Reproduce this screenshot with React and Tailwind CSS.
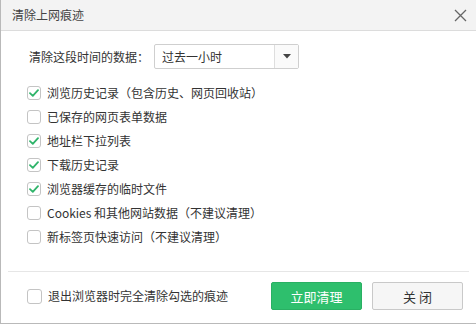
import { useState } from "react";

const items = [
  { label: "浏览历史记录（包含历史、网页回收站）", checked: true },
  { label: "已保存的网页表单数据", checked: false },
  { label: "地址栏下拉列表", checked: true },
  { label: "下载历史记录", checked: true },
  { label: "浏览器缓存的临时文件", checked: true },
  { label: "Cookies 和其他网站数据（不建议清理）", checked: false },
  { label: "新标签页快速访问（不建议清理）", checked: false },
];

function CheckBox({ checked, onClick, size = "w-[14px] h-[14px]" }) {
  return (
    <button
      onClick={onClick}
      className={`${size} shrink-0 rounded-[3px] border border-[#c4c4c4] bg-white flex items-center justify-center`}
    >
      {checked && (
        <svg width="10" height="8" viewBox="0 0 10 8" fill="none">
          <path
            d="M1 4.2 L3.8 6.8 L9 1.2"
            stroke="#2fb46a"
            strokeWidth="1.8"
            strokeLinecap="round"
            strokeLinejoin="round"
          />
        </svg>
      )}
    </button>
  );
}

function App() {
  const [checks, setChecks] = useState(items.map((i) => i.checked));
  const [exitClear, setExitClear] = useState(false);

  const toggle = (idx) => {
    setChecks(checks.map((c, i) => (i === idx ? !c : c)));
  };

  return (
    <div
      className="w-[476px] h-[324px] bg-white flex flex-col border-l border-b border-[#b9b9b9] text-[#333] text-[12px]"
      style={{ fontFamily: '"Noto Sans CJK SC", "Noto Sans", sans-serif' }}
    >
      <div className="h-[31px] shrink-0 bg-[#f3f3f3] border-b border-[#dcdcdc] flex items-center justify-between pl-[11px] pr-[8px]">
        <span className="text-[12px] text-[#444] leading-none">清除上网痕迹</span>
        <button className="w-[16px] h-[16px] flex items-center justify-center">
          <svg width="13" height="13" viewBox="0 0 13 13">
            <path d="M1 1 L12 12 M12 1 L1 12" stroke="#666" strokeWidth="1.3" />
          </svg>
        </button>
      </div>

      <div className="flex-1 flex flex-col">
        <div className="flex items-center mt-[13px] pl-[28px] h-[25px]">
          <span className="w-[125px] leading-none">清除这段时间的数据：</span>
          <div className="w-[145px] h-[25px] border border-[#cfcfcf] rounded-[2px] flex">
            <span className="flex-1 pl-[7px] flex items-center leading-none">过去一小时</span>
            <div className="w-[24px] border-l border-[#dedede] bg-[#fafafa] flex items-center justify-center">
              <svg width="8" height="5" viewBox="0 0 8 5">
                <path d="M0 0 L8 0 L4 4.5 Z" fill="#444" />
              </svg>
            </div>
          </div>
        </div>

        <div className="flex flex-col mt-[12px] pl-[26px]">
          {items.map((item, idx) => (
            <div key={idx} className="h-[24px] flex items-center gap-[6px]">
              <CheckBox checked={checks[idx]} onClick={() => toggle(idx)} />
              <span className="leading-none">{item.label}</span>
            </div>
          ))}
        </div>
      </div>

      <div className="mx-[7px] border-t border-[#e6e6e6]" />

      <div className="h-[51px] shrink-0 flex items-start pt-[10px] pl-[26px] pr-[13px]">
        <div className="flex items-center gap-[6px] h-[28px]">
          <CheckBox
            checked={exitClear}
            onClick={() => setExitClear(!exitClear)}
            size="w-[15px] h-[15px]"
          />
          <span className="leading-none">退出浏览器时完全清除勾选的痕迹</span>
        </div>
        <div className="ml-auto flex gap-[10px]">
          <button className="w-[91px] h-[28px] rounded-[2px] bg-[#2ebf6d] border border-[#29b063] text-white text-[13px] leading-none">
            立即清理
          </button>
          <button className="w-[91px] h-[28px] rounded-[2px] bg-[#f6f6f6] border border-[#c9c9c9] text-[#333] text-[13px] leading-none">
            关 闭
          </button>
        </div>
      </div>
    </div>
  );
}

export default App;
